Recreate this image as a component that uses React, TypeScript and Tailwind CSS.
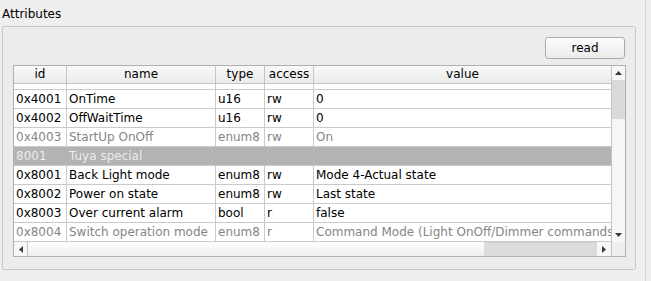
import React from "react";

type Row = { id: string; name: string; type: string; access: string; value: string; kind: "n" | "d" | "s" };

const rows: Row[] = [
  { id: "0x4001", name: "OnTime", type: "u16", access: "rw", value: "0", kind: "n" },
  { id: "0x4002", name: "OffWaitTime", type: "u16", access: "rw", value: "0", kind: "n" },
  { id: "0x4003", name: "StartUp OnOff", type: "enum8", access: "rw", value: "On", kind: "d" },
  { id: "8001", name: "Tuya special", type: "", access: "", value: "", kind: "s" },
  { id: "0x8001", name: "Back Light mode", type: "enum8", access: "rw", value: "Mode 4-Actual state", kind: "n" },
  { id: "0x8002", name: "Power on state", type: "enum8", access: "rw", value: "Last state", kind: "n" },
  { id: "0x8003", name: "Over current alarm", type: "bool", access: "r", value: "false", kind: "n" },
  { id: "0x8004", name: "Switch operation mode", type: "enum8", access: "r", value: "Command Mode (Light OnOff/Dimmer commands)", kind: "d" },
];

const Tri = ({ dir }: { dir: "up" | "down" | "left" | "right" }) => {
  const pts =
    dir === "up" ? "0,4 7,4 3.5,0" : dir === "down" ? "0,0 7,0 3.5,4" : dir === "left" ? "4,0 4,7 0,3.5" : "0,0 0,7 4,3.5";
  const w = dir === "up" || dir === "down" ? 7 : 4;
  const h = dir === "up" || dir === "down" ? 4 : 7;
  return (
    <svg width={w} height={h} viewBox={`0 0 ${w} ${h}`}>
      <polygon points={pts} fill="#3a3a3a" />
    </svg>
  );
};

export default function App() {
  const headers = [
    { t: "id", w: "w-[53px]" },
    { t: "name", w: "w-[149px]" },
    { t: "type", w: "w-[49px]" },
    { t: "access", w: "w-[49px]" },
  ];
  return (
    <div className="w-[651px] h-[281px] bg-[#efefef] flex text-[12px] text-black overflow-hidden font-['DejaVu_Sans',sans-serif]">
      <div className="w-[645px] flex flex-col pl-[2px]">
        <div className="h-[26px] pt-[7px] leading-[15px]">Attributes</div>
        <div className="w-[634px] h-[244px] border border-[#c8c8c8] rounded-[2px] bg-[#ececec] pt-[10px] pl-[10px] pr-[9px] flex flex-col">
          <div className="flex justify-end pr-[1px]">
            <button className="w-[80px] h-[22px] rounded-[3px] border border-[#ababab] bg-gradient-to-b from-[#fcfcfc] to-[#ebebeb] leading-[20px] text-[12px]">
              read
            </button>
          </div>
          <div className="mt-[6px] w-[613px] h-[192px] border border-[#b0b0b0] bg-white flex flex-col">
            <div className="flex h-[176px]">
              <div className="w-[597px] flex flex-col">
                {/* header */}
                <div className="flex h-[18px] border-b border-[#c4c4c4] bg-gradient-to-b from-[#f8f8f8] to-[#ebebeb]">
                  {headers.map((h) => (
                    <div key={h.t} className={`${h.w} border-r border-[#c4c4c4] text-center leading-[17px]`}>
                      {h.t}
                    </div>
                  ))}
                  <div className="w-[297px] text-center leading-[17px]">value</div>
                </div>
                {/* partial row */}
                <div className="flex h-[6px] border-b border-[#cacaca]">
                  <div className="w-[53px] border-r border-[#cacaca]" />
                  <div className="w-[149px] border-r border-[#cacaca]" />
                  <div className="w-[49px] border-r border-[#cacaca]" />
                  <div className="w-[49px] border-r border-[#cacaca]" />
                  <div className="w-[297px]" />
                </div>
                {rows.map((r) => {
                  if (r.kind === "s") {
                    return (
                      <div key={r.id} className="flex h-[19px] border-b border-[#cacaca] bg-[#b3b3b3] text-[#ececec] leading-[18px]">
                        <div className="w-[53px] pl-[2px]">{r.id}</div>
                        <div className="w-[149px] pl-[2px]">{r.name}</div>
                      </div>
                    );
                  }
                  const c = r.kind === "d" ? "text-[#858585]" : "text-black";
                  return (
                    <div key={r.id} className={`flex h-[19px] border-b border-[#cacaca] leading-[18px] whitespace-nowrap ${c}`}>
                      <div className="w-[53px] border-r border-[#cacaca] pl-[2px] overflow-hidden">{r.id}</div>
                      <div className="w-[149px] border-r border-[#cacaca] pl-[2px] overflow-hidden">{r.name}</div>
                      <div className="w-[49px] border-r border-[#cacaca] pl-[2px] overflow-hidden">{r.type}</div>
                      <div className="w-[49px] border-r border-[#cacaca] pl-[2px] overflow-hidden">{r.access}</div>
                      <div className="w-[297px] pl-[2px] overflow-hidden">{r.value}</div>
                    </div>
                  );
                })}
              </div>
              {/* vertical scrollbar */}
              <div className="w-[14px] border-l border-[#c4c4c4] flex flex-col bg-[#f4f4f4]">
                <div className="h-[14px] flex items-center justify-center bg-[#f7f7f7]">
                  <Tri dir="up" />
                </div>
                <div className="h-[39px] bg-[#d9d9d9]" />
                <div className="flex-1 bg-[#f6f6f6]" />
                <div className="h-[15px] flex items-center justify-center bg-[#f7f7f7]">
                  <Tri dir="down" />
                </div>
              </div>
            </div>
            {/* horizontal scrollbar */}
            <div className="flex h-[14px]">
              <div className="w-[14px] border-r border-[#c4c4c4] flex items-center justify-center bg-[#f7f7f7]">
                <Tri dir="left" />
              </div>
              <div className="w-[456px] bg-gradient-to-b from-[#fdfdfd] to-[#efefef]" />
              <div className="w-[113px] bg-[#dcdcdc] border-t border-[#d0d0d0]" />
              <div className="w-[14px] flex items-center justify-center bg-[#f7f7f7]">
                <Tri dir="right" />
              </div>
              <div className="w-[14px] border-l border-[#c4c4c4] bg-[#efefef]" />
            </div>
          </div>
        </div>
      </div>
      <div className="w-[6px] border-l border-[#d2d2d2]" />
    </div>
  );
}
